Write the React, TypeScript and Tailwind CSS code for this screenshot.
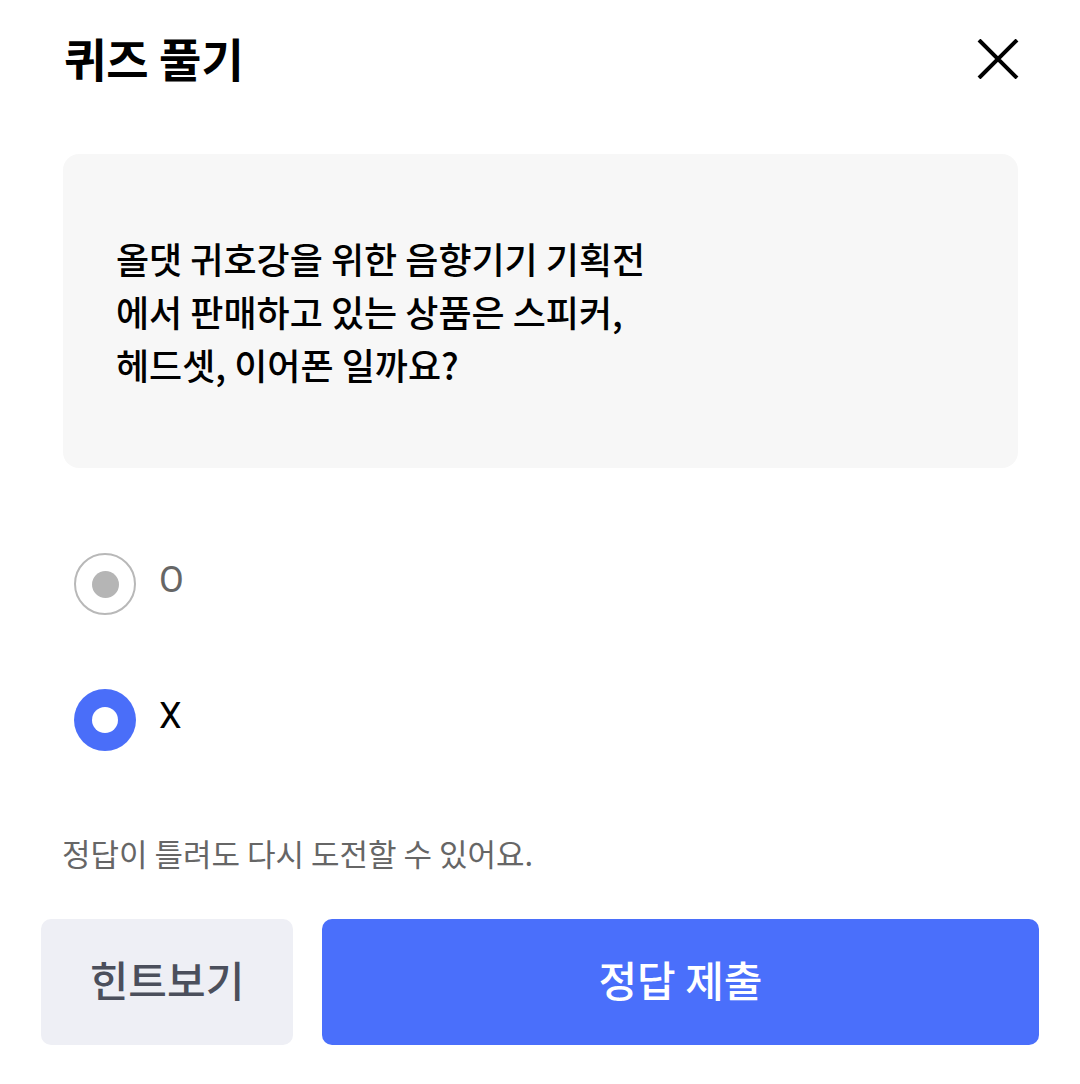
import { useState } from 'react'

const font = "font-['Noto_Sans_CJK_KR','Noto_Sans',sans-serif]"

const Radio = ({ checked, label, onClick }: { checked: boolean; label: string; onClick: () => void }) => (
  <button onClick={onClick} className="flex items-center h-[62px] gap-[23px] text-left">
    {checked ? (
      <span className="w-[62px] h-[62px] rounded-full bg-[#4a6ef9] flex items-center justify-center">
        <span className="w-[26px] h-[26px] rounded-full bg-white" />
      </span>
    ) : (
      <span className="w-[62px] h-[62px] rounded-full border-2 border-[#b8b8b8] flex items-center justify-center">
        <span className="w-[27px] h-[27px] rounded-full bg-[#b5b5b5]" />
      </span>
    )}
    <span
      className={`font-['Roboto',sans-serif] text-[36px] leading-none -mt-[8px] ${
        checked ? 'text-black' : 'text-[#666666]'
      }`}
    >
      {label}
    </span>
  </button>
)

const App = () => {
  const [answer, setAnswer] = useState('X')

  return (
    <div className={`w-[1080px] h-[1084px] bg-white flex flex-col ${font}`}>
      <header className="flex justify-between items-center h-[116px] pl-[64px] pr-[60px] pb-[2px]">
        <h1 className="text-[46px] font-bold text-black leading-none">퀴즈 풀기</h1>
        <button className="w-[44px] h-[44px] flex items-center justify-center mt-[4px]">
          <svg width="42" height="40" viewBox="0 0 42 40" fill="none" stroke="black" strokeWidth="4">
            <path d="M2 1L40 39M40 1L2 39" />
          </svg>
        </button>
      </header>

      <div className="ml-[63px] mt-[38px] w-[955px] h-[314px] rounded-2xl bg-[#f7f7f7] flex items-center pl-[53px]">
        <p className="text-[36px] font-medium text-black leading-[53px]">
          올댓 귀호강을 위한 음향기기 기획전
          <br />
          에서 판매하고 있는 상품은 스피커,
          <br />
          헤드셋, 이어폰 일까요?
        </p>
      </div>

      <div className="ml-[74px] mt-[85px] flex flex-col gap-[74px]">
        <Radio checked={answer === 'O'} label="O" onClick={() => setAnswer('O')} />
        <Radio checked={answer === 'X'} label="X" onClick={() => setAnswer('X')} />
      </div>

      <p className="ml-[62px] mt-[86px] text-[31px] text-[#666666] leading-none">
        정답이 틀려도 다시 도전할 수 있어요.
      </p>

      <div className="mx-[41px] mt-[51px] flex gap-[29px]">
        <button className="w-[252px] h-[126px] pb-[8px] rounded-[10px] bg-[#eeeff5] text-[42px] font-medium text-[#4b4f5c]">
          힌트보기
        </button>
        <button className="flex-1 h-[126px] pb-[8px] rounded-[10px] bg-[#4a6ffb] text-[42px] font-medium text-white">
          정답 제출
        </button>
      </div>
    </div>
  )
}

export default App
